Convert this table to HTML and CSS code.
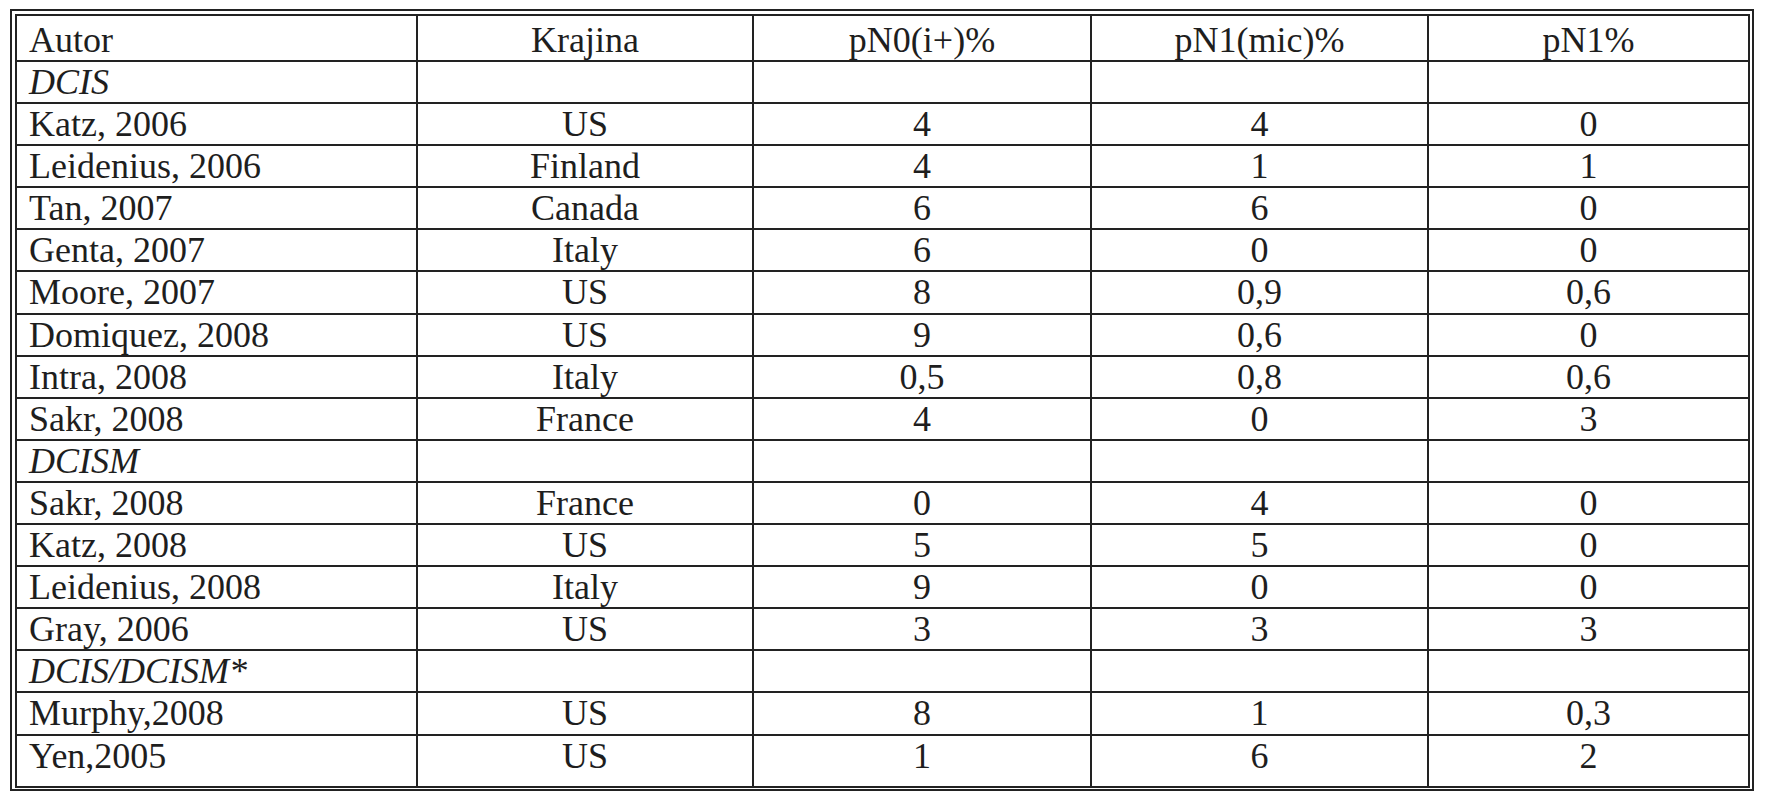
FILE: index.html
```html
<!DOCTYPE html>
<html lang="sk">
<head>
<meta charset="utf-8">
<title>Tabuľka</title>
<link rel="stylesheet" href="styles.css">
</head>
<body>
<div class="frame">
<table class="data">
<colgroup>
<col class="c-autor"><col class="c-krajina"><col class="c-n0"><col class="c-mic"><col class="c-n1">
</colgroup>
<tbody>
<tr class="head"><td class="left">Autor</td><td>Krajina</td><td>pN0(i+)%</td><td>pN1(mic)%</td><td>pN1%</td></tr>
<tr class="section"><td class="left">DCIS</td><td></td><td></td><td></td><td></td></tr>
<tr><td class="left">Katz, 2006</td><td>US</td><td>4</td><td>4</td><td>0</td></tr>
<tr><td class="left">Leidenius, 2006</td><td>Finland</td><td>4</td><td>1</td><td>1</td></tr>
<tr><td class="left">Tan, 2007</td><td>Canada</td><td>6</td><td>6</td><td>0</td></tr>
<tr><td class="left">Genta, 2007</td><td>Italy</td><td>6</td><td>0</td><td>0</td></tr>
<tr><td class="left">Moore, 2007</td><td>US</td><td>8</td><td>0,9</td><td>0,6</td></tr>
<tr><td class="left">Domiquez, 2008</td><td>US</td><td>9</td><td>0,6</td><td>0</td></tr>
<tr><td class="left">Intra, 2008</td><td>Italy</td><td>0,5</td><td>0,8</td><td>0,6</td></tr>
<tr><td class="left">Sakr, 2008</td><td>France</td><td>4</td><td>0</td><td>3</td></tr>
<tr class="section"><td class="left">DCISM</td><td></td><td></td><td></td><td></td></tr>
<tr><td class="left">Sakr, 2008</td><td>France</td><td>0</td><td>4</td><td>0</td></tr>
<tr><td class="left">Katz, 2008</td><td>US</td><td>5</td><td>5</td><td>0</td></tr>
<tr><td class="left">Leidenius, 2008</td><td>Italy</td><td>9</td><td>0</td><td>0</td></tr>
<tr><td class="left">Gray, 2006</td><td>US</td><td>3</td><td>3</td><td>3</td></tr>
<tr class="section"><td class="left">DCIS/DCISM*</td><td></td><td></td><td></td><td></td></tr>
<tr><td class="left">Murphy,2008</td><td>US</td><td>8</td><td>1</td><td>0,3</td></tr>
<tr class="last"><td class="left">Yen,2005</td><td>US</td><td>1</td><td>6</td><td>2</td></tr>
</tbody>
</table>
</div>
</body>
</html>
```

FILE: styles.css
```css
html, body {
  margin: 0;
  padding: 0;
  background: #ffffff;
}

body {
  font-family: "Liberation Serif", "Times New Roman", serif;
  color: #1e1e1e;
}

.frame {
  display: inline-block;
  margin: 9px 0 0 10px;
  border: 2px solid #222222;
  padding: 3px 2px 1px 3px;
}

.data {
  border-collapse: collapse;
  table-layout: fixed;
  width: 1735px;
  border: 2px solid #222222;
  font-size: 36px;
  line-height: 40px;
}

.c-autor { width: 401px; }
.c-krajina { width: 336px; }
.c-n0 { width: 338px; }
.c-mic { width: 337px; }
.c-n1 { width: 321px; }

.data td {
  border: 2px solid #222222;
  padding: 0 12px;
  text-align: center;
  vertical-align: top;
  white-space: nowrap;
  height: 42.1px;
  box-sizing: border-box;
}

.data td.left {
  text-align: left;
}

.data tr.head td {
  height: 46px;
  padding-top: 4px;
}

.data tr.section td {
  font-style: italic;
}

.data tr.last td {
  height: 52px;
}
```
